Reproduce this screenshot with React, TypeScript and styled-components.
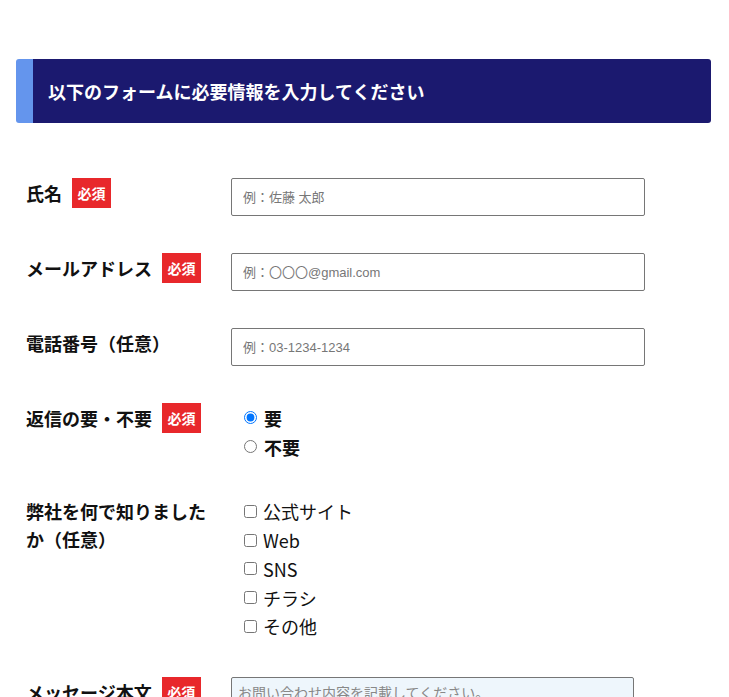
import styled, { createGlobalStyle } from "styled-components";

const GlobalStyle = createGlobalStyle`
  body {
    margin: 0;
    background: #fff;
    color: #111;
    font-family: "Noto Sans CJK JP", "Noto Sans", sans-serif;
  }
`;

type Field = {
  label: string;
  required?: boolean;
  placeholder: string;
  type?: string;
};

const textFields: Field[] = [
  { label: "氏名", required: true, placeholder: "例：佐藤 太郎" },
  {
    label: "メールアドレス",
    required: true,
    placeholder: "例：〇〇〇@gmail.com",
    type: "email",
  },
  { label: "電話番号（任意）", placeholder: "例：03-1234-1234", type: "tel" },
];

const sources = ["公式サイト", "Web", "SNS", "チラシ", "その他"];

export default function App() {
  return (
    <>
      <GlobalStyle />
      <Page>
        <Heading>以下のフォームに必要情報を入力してください</Heading>
        <Form>
          {textFields.map((f) => (
            <Row key={f.label}>
              <Label>
                {f.label}
                {f.required && <Badge>必須</Badge>}
              </Label>
              <TextInput type={f.type ?? "text"} placeholder={f.placeholder} />
            </Row>
          ))}

          <Row gap={36}>
            <Label>
              返信の要・不要
              <Badge>必須</Badge>
            </Label>
            <ChoiceList>
              <Choice bold>
                <input type="radio" name="reply" defaultChecked />
                要
              </Choice>
              <Choice bold>
                <input type="radio" name="reply" />
                不要
              </Choice>
            </ChoiceList>
          </Row>

          <Row gap={36}>
            <Label>弊社を何で知りましたか（任意）</Label>
            <ChoiceList>
              {sources.map((s) => (
                <Choice key={s}>
                  <input type="checkbox" />
                  {s}
                </Choice>
              ))}
            </ChoiceList>
          </Row>

          <Row>
            <Label>
              メッセージ本文
              <Badge>必須</Badge>
            </Label>
            <Message placeholder="お問い合わせ内容を記載してください。" />
          </Row>
        </Form>
      </Page>
    </>
  );
}

const Page = styled.div`
  width: 695px;
  padding: 59px 0 0 16px;
`;

const Heading = styled.h2`
  margin: 0;
  height: 64px;
  display: flex;
  align-items: center;
  box-sizing: border-box;
  padding-left: 15px;
  background-color: #1b196f;
  border-left: 17px solid #6495ed;
  border-radius: 3px;
  color: #fff;
  font-size: 18px;
  font-weight: 700;
`;

const Form = styled.form`
  padding: 55px 0 0 10px;
`;

const Row = styled.div<{ gap?: number }>`
  display: grid;
  grid-template-columns: 190px 1fr;
  column-gap: 15px;
  align-items: start;
  margin-bottom: ${(p) => p.gap ?? 37}px;
`;

const Label = styled.div`
  display: flex;
  flex-wrap: wrap;
  align-items: center;
  min-height: 30px;
  font-size: 18px;
  font-weight: 700;
  line-height: 28px;
`;

const Badge = styled.span`
  display: inline-flex;
  align-items: center;
  justify-content: center;
  width: 39px;
  height: 30px;
  margin-left: 10px;
  background-color: #e8282b;
  color: #fff;
  font-size: 14px;
  font-weight: 700;
`;

const TextInput = styled.input`
  box-sizing: border-box;
  width: 414px;
  height: 38px;
  margin: 0;
  padding: 0 11px;
  border: 1px solid #767676;
  border-radius: 2px;
  font-family: "Liberation Sans", "Noto Sans CJK JP", sans-serif;
  font-size: 13px;
  color: #333;

  &::placeholder {
    color: #777;
  }
`;

const ChoiceList = styled.div`
  display: flex;
  flex-direction: column;
  padding-left: 13px;
`;

const Choice = styled.label<{ bold?: boolean }>`
  display: flex;
  align-items: center;
  gap: ${(p) => (p.bold ? "7px" : "6px")};
  height: ${(p) => (p.bold ? "29px" : "28.75px")};
  font-size: 18px;
  font-weight: ${(p) => (p.bold ? 700 : 400)};

  input {
    width: 13px;
    height: 13px;
    margin: 0;
  }
`;

const Message = styled.textarea`
  box-sizing: border-box;
  width: 403px;
  height: 160px;
  margin: 0;
  padding: 4px 6px;
  border: 1px solid #767676;
  border-radius: 2px;
  background-color: #eef6fc;
  font-family: "Noto Sans CJK JP", sans-serif;
  font-size: 14px;
  resize: vertical;

  &::placeholder {
    color: #888;
  }
`;
